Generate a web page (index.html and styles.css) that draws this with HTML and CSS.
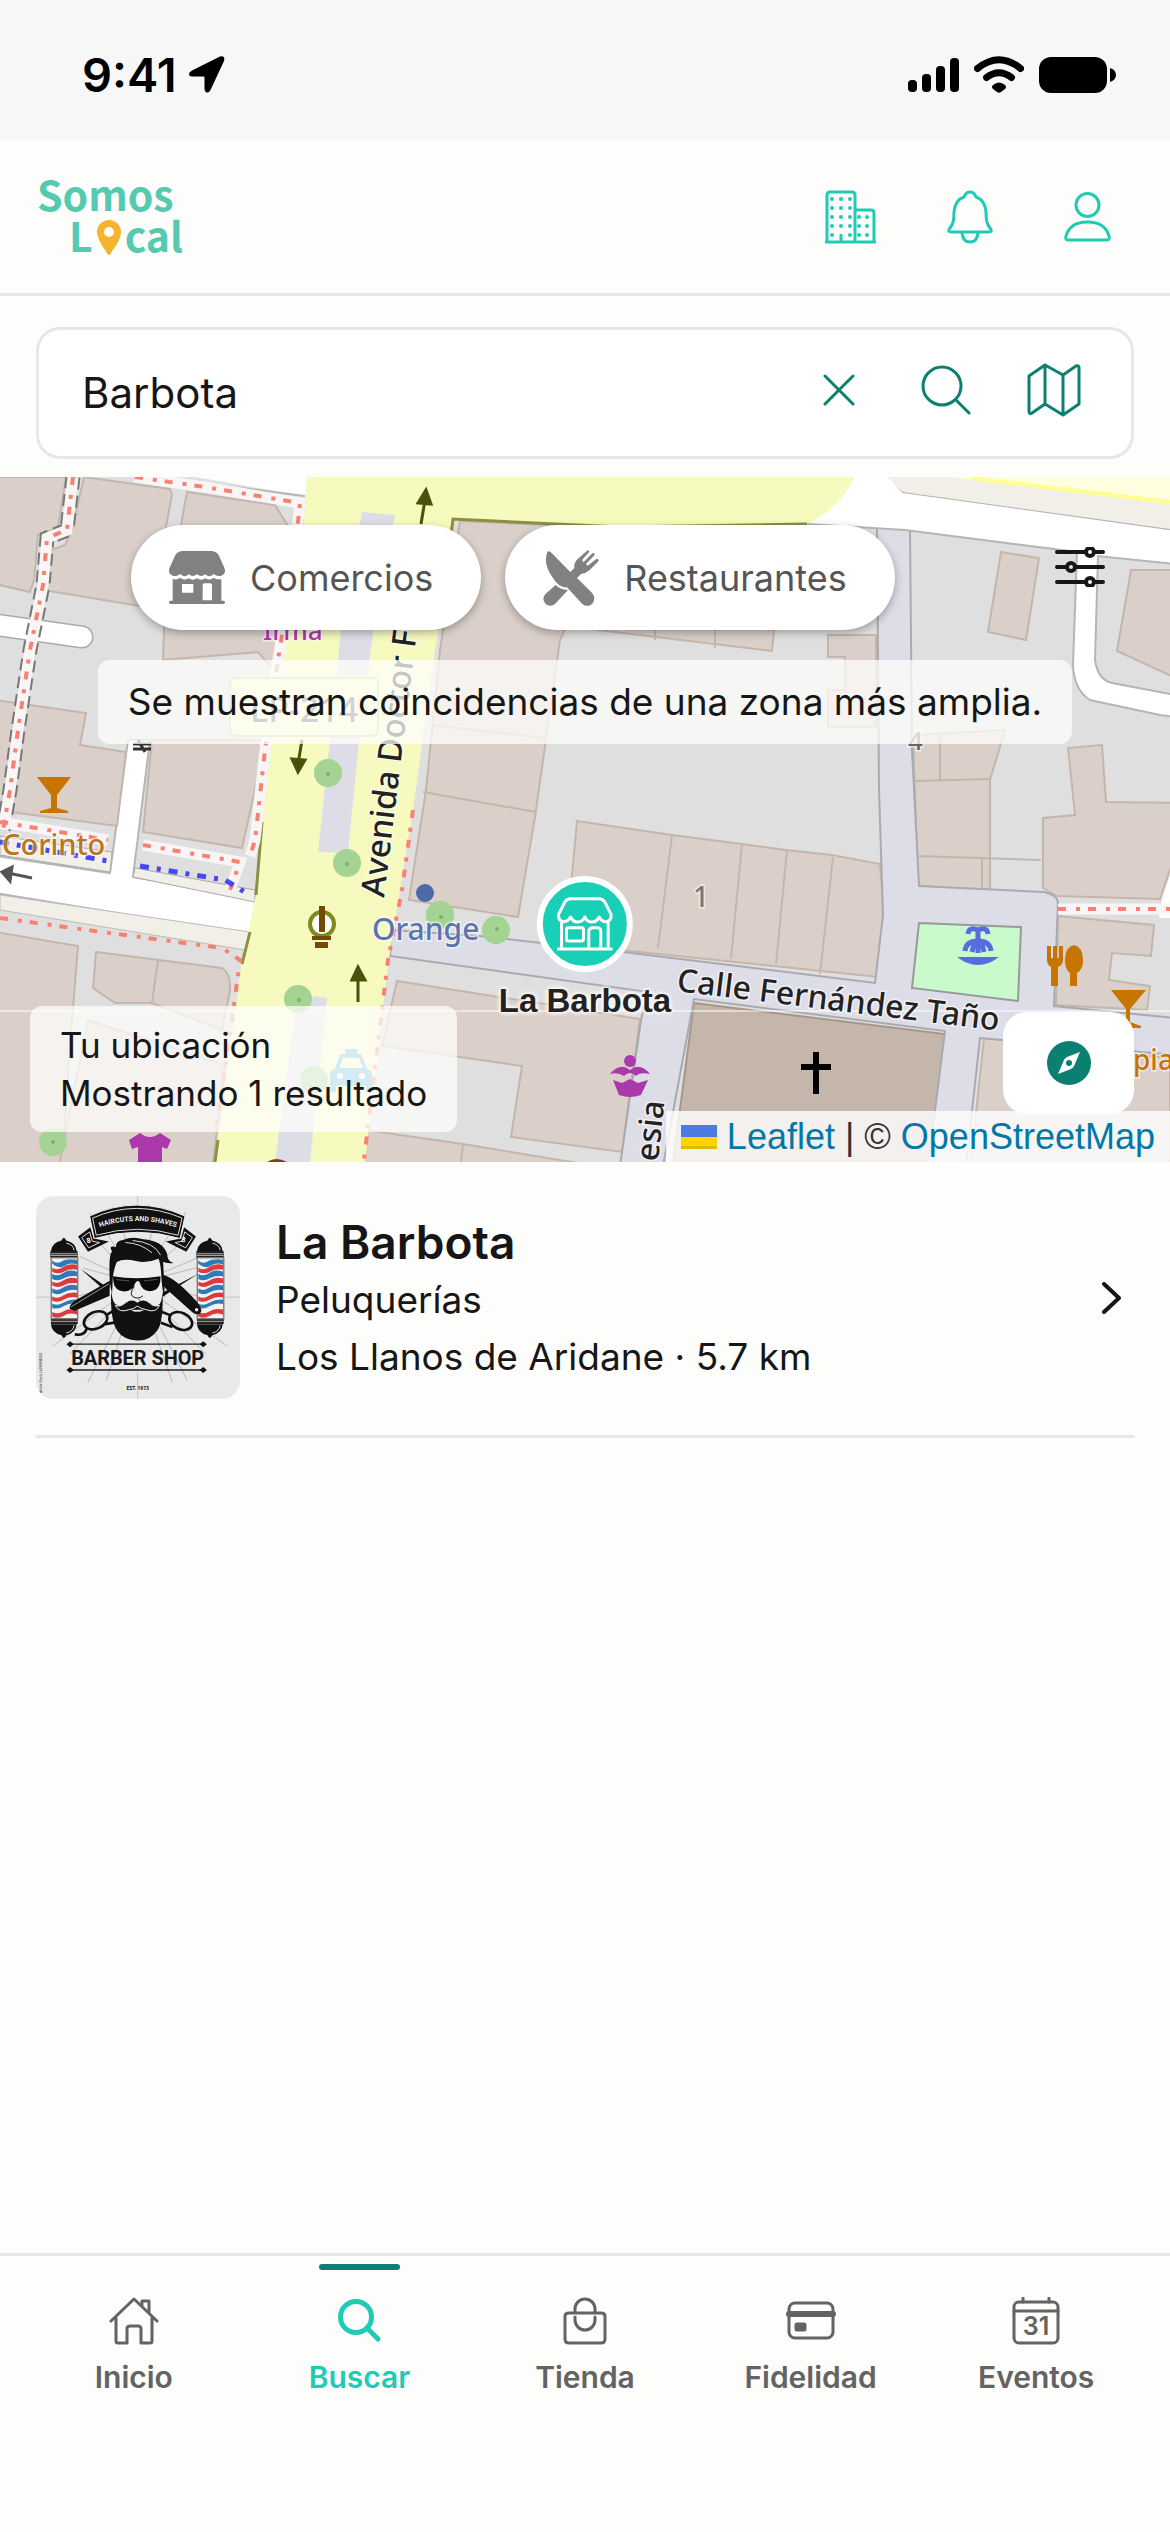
FILE: index.html
```html
<!DOCTYPE html>
<html lang="es">
<head>
	<title>Somos Local</title>
	<meta charset="utf-8">
	<meta name="viewport" content="width=device-width, initial-scale=1">
	<link rel="stylesheet" href="styles.css">
</head>
<body>

	<div class="status">
		<div class="status-left">
			<span>9:41</span>
			<svg width="36" height="37" viewBox="0 0 36 37"><path d="M31 0.5Q36.500 -0.500 35 5L21.500 34Q20 37 17.500 36.500Q15.500 36 15.500 33V21.500Q15.500 20.500 14.500 20.500H3Q0 20.500 0 18Q0 16 3 14.500Z"/></svg>
		</div>
		<div class="status-right">
			<svg width="51" height="36" viewBox="0 0 51 36"><rect x="0" y="23" width="9" height="12" rx="4"/><rect x="14" y="17" width="9" height="18" rx="4"/><rect x="28" y="9" width="9" height="26" rx="4"/><rect x="42" y="1" width="9" height="34" rx="4"/></svg>
			<svg width="50" height="37" viewBox="0 0 50 37"><path d="M3.500 12.500Q25 -5 46.500 12.500M12.500 21.500Q25 12 37.500 21.500" fill="none" stroke="#000" stroke-width="7" stroke-linecap="round"/><path d="M19 29Q25 24 31 29Q33 31 31 33L27 36Q25 37.500 23 36L19 33Q17 31 19 29Z"/></svg>
			<svg width="77" height="36" viewBox="0 0 77 36"><rect width="68" height="36" rx="12"/><path d="M71 11Q77 13 77 18T71 25Z"/></svg>
		</div>
	</div>

	<header class="header">
		<a href="#" class="logo" aria-label="Somos Local">
			<span class="logo-top">Somos</span>
			<span class="logo-bottom">L<svg width="26" height="36" viewBox="0 0 26 36"><path fill="#f6b42e" fill-rule="evenodd" d="M13 0A12 12 0 0 1 25 12C25 20 17 29 14.500 34Q13 36 11.500 34C9 29 1 20 1 12A12 12 0 0 1 13 0ZM13 7A5 5 0 1 0 13 17A5 5 0 1 0 13 7Z"/></svg>cal</span>
		</a>
		<div class="header-icons">
			<button class="icon-btn" aria-label="Empresas">
				<svg width="51" height="54" viewBox="0 0 51 54"><g fill="none" stroke="#1fcbb4" stroke-width="3"><path d="M2 52V5Q2 2 5 2H27Q30 2 30 5V52M30 20H46Q49 20 49 23V52M0 52H51"/><path d="M16 52V44"/></g><g fill="none" stroke="#1fcbb4" stroke-width="4" stroke-linecap="round" stroke-dasharray="0 9"><path d="M7 9V46M25 9V46M34 27V46M42 27V46M16 9V37"/></g></svg>
			</button>
			<button class="icon-btn" aria-label="Avisos">
				<svg width="46" height="54" viewBox="0 0 46 54" fill="none" stroke="#1fcbb4" stroke-width="3" stroke-linejoin="round"><path d="M23 2Q27 2 29 7Q38 10 39 22C39 31 40 34 43 38Q46 42 42 42H4Q0 42 3 38C6 34 7 31 7 22Q8 10 17 7Q19 2 23 2Z"/><path d="M15 43Q16 52 23 52T31 43"/></svg>
			</button>
			<button class="icon-btn" aria-label="Perfil">
				<svg width="47" height="52" viewBox="0 0 47 52" fill="none" stroke="#1fcbb4" stroke-width="3" stroke-linejoin="round"><circle cx="23.500" cy="14" r="11.500"/><path d="M4 49Q1 49 2 45Q6 31 23.500 31T45 45Q46 49 43 49Z"/></svg>
			</button>
		</div>
	</header>

	<main>
		<form class="search">
			<div class="search-box">
				<input type="text" class="search-input" aria-label="Buscar comercios" value="Barbota">
				<button type="reset" class="icon-btn clear" aria-label="Borrar">
					<svg width="32" height="32" viewBox="0 0 32 32" class="line"><path d="M2 2L30 30M30 2L2 30"/></svg>
				</button>
				<button type="submit" class="icon-btn" aria-label="Buscar">
					<svg width="50" height="50" viewBox="0 0 50 50" class="line"><circle cx="21" cy="21" r="19"/><path d="M35 35L48 48"/></svg>
				</button>
				<button type="button" class="icon-btn" aria-label="Mapa">
					<svg width="54" height="54" viewBox="0 0 54 54" class="line"><path d="M2 13L18 2L36 12L49 3Q52 2 52 5V41L36 52L18 41L5 50Q2 52 2 48ZM18 2V41M36 12V52"/></svg>
				</button>
			</div>
		</form>

		<section class="map">
			<svg class="map-tiles" viewBox="0 477 1170 685" role="img" aria-label="Mapa de la zona">
				<rect y="477" width="1170" height="685" fill="#e0dfdf"/>

				<!-- streets -->
				<path class="kerb" d="M-10 855L110 873L128 740H150L133 877L262 900L250 935L-10 892Z" fill="#fff"/>
				<path d="M0 895L250 932L245 950L0 910Z" fill="#f2efe9" stroke="#bbb"/>
				<path d="M135 868L255 890V902L133 877ZM0 836L112 852L110 872L0 855Z" fill="#f2efe9" stroke="#aaa"/>
				<path d="M205 477H310L305 496L155 470Z" fill="#fff"/>
				<path class="kerb" d="M150 476L305 496"/>
				<path d="M-10 624L82 637" stroke="#aaa" stroke-width="23" stroke-linecap="round"/>
				<path d="M-10 624L82 637" stroke="#fff" stroke-width="20" stroke-linecap="round"/>

				<!-- buildings, left side -->
				<g class="building">
					<path d="M-5 477H66L58 528L38 535L34 580L30 592L-5 584Z"/>
					<path d="M84 477L170 489L172 495L165 532L152 608L43 590L46 552L65 545L72 530Z"/>
					<path d="M187 492L275 505L300 545L284 600L170 585Z"/>
					<path d="M165 600L285 625L282 680L258 652L163 660Z"/>
					<path d="M-5 700L86 713L80 745L126 752L117 826L-5 810Z"/>
					<path d="M152 740H266L242 848L143 832Z"/>
					<path d="M-5 932L78 946L70 1045L62 1170H-5Z"/>
					<path d="M96 952L222 968Q231 973 230 990L222 1030L152 1003L115 1003L93 988ZM158 960L152 1003"/>
					<path d="M88 1020L225 1065L212 1170H58Z"/>
				</g>

				<!-- building block between the avenue and the plaza -->
				<g class="building">
					<path d="M460 521L612 528L560 640L535 817L518 917L409 900L426 790L440 650Z"/>
					<path d="M423 792L536 812M430 725L545 738"/>
					<path d="M598 630L772 651L775 620L600 610ZM655 620V640M715 620V648"/>
					<path d="M828 635H876V727H828V690H845V657H828Z"/>
					<path d="M577 821L672 835L742 844L786 850L832 855L880 864L884 910L878 977L620 950L566 940ZM672 835L658 948M742 844L731 958M787 850L776 964M833 857L820 974"/>
					<path d="M397 981L640 1019L622 1152L511 1137L522 1066L382 1046Z"/>
					<path d="M366 1130L463 1144L620 1170H362ZM463 1144L460 1170"/>
					<path d="M984 1038L1170 1058V1170H970Z"/>
				</g>

				<!-- buildings, right side -->
				<g class="building">
					<path d="M1001 552L1039 558L1026 640L988 632Z"/>
					<path d="M1131 570H1180V680L1117 651Z"/>
					<path d="M913 735L1005 730L990 780V890L918 886ZM940 735V781M916 781L990 779M917 856L1041 860M982 859V888"/>
					<path d="M1068 748L1102 745L1106 802L1180 803V840L1160 899L1057 896L1043 888V818L1075 815Z"/>
					<path d="M1058 916L1154 925L1151 956L1112 953L1109 980L1150 986L1147 1010L1056 1005Z"/>
				</g>
				<path d="M694 1003L945 1034L930 1170H672Z" fill="#c4b6ab" stroke="#a79687" stroke-width="2"/>

				<!-- pedestrian area -->
				<path class="walk" d="M877 527L910 530L912 750L919 886L1044 892Q1057 895 1058 902L1054 1006L1175 1018V1055L980 1038L966 1166H928L945 1031L694 999L663 1166H620L641 1020L648 992L390 956L392 930L480 936L623 952L875 983L883 915L879 790Z"/>
				<path d="M919 923L1021 927L1018 1001L912 988Z" fill="#c8facc" stroke="#999" stroke-width="2"/>

				<!-- white street on the right -->
				<path class="kerb" d="M807 524L855 470H884L903 492L1175 530V564L1098 556L1095 660Q1098 680 1112 683L1175 695V717L1160 715L1090 700Q1074 690 1073 665L1077 552L905 530Z" fill="#fff"/>
				<path d="M887 477L903 492L1170 529V477Z" fill="#f2efe9"/>
				<path d="M950 477L1170 503V477Z" fill="#ffffe0"/>
				<path d="M970 478L1170 502" stroke="#ffff90" stroke-width="4"/>
				<path d="M1162 899L1175 860V918H1159Z" fill="#fff"/>

				<!-- avenue -->
				<path d="M307 477H855Q838 510 807 524L620 527L453 519L446 590L435 650L413 810L400 890L388 965L365 1162H215L242 960L256 895L262 820L283 640L300 540Z" fill="#f7fabf"/>
				<path d="M807 524L620 527L453 519L448 560M304 500L299 550M262 822L256 895M250 932L242 964M218 1140L215 1162" fill="none" stroke="#8a9140" stroke-width="3"/>
				<path d="M362 512L395 515L376 610L359 740L348 853L318 852L330 740L343 610Z" fill="#dddde8"/>
				<path d="M314 996L327 998L310 1162H275L295 1015Z" fill="#dddde8"/>

				<!-- footways -->
				<path class="footway-edge" d="M73 477L67 530L47 538L43 585L35 625L30 650L18 730L10 790L3 830"/>
				<path class="footway-bed" d="M73 477L67 530L47 538L43 585L35 625L30 650L18 730L10 790L3 830"/>
				<path class="footway-bed" d="M135 477L205 487L300 503L295 550L278 660L265 750L255 840L250 856M0 822L108 840M143 845L240 862L230 890M1058 909H1170"/>
				<path class="footway" d="M73 477L67 530L47 538L43 585L35 625L30 650L18 730L10 790L3 830"/>
				<path class="footway" d="M135 477L205 487L300 503L295 550L278 660L265 750L255 840L250 856M0 822L108 840M143 845L240 862L230 890M0 918L80 929L222 948L240 960L232 1020L216 1130M413 810L402 890L388 960L364 1160M1058 909H1170"/>
				<path d="M0 842L108 861M140 866L225 880L248 894" fill="none" stroke="#4747f0" stroke-width="5" stroke-dasharray="9 8 4 8"/>
				<path d="M0 1011H1170" stroke="#fff" stroke-width="2" opacity="0.5"/>

				<!-- trees -->
				<g fill="#a5d393">
					<circle cx="328" cy="773" r="14"/><circle cx="347" cy="863" r="14"/><circle cx="298" cy="999" r="14"/><circle cx="314" cy="1080" r="14"/><circle cx="53" cy="1142" r="14"/><circle cx="440" cy="915" r="14"/><circle cx="496" cy="930" r="14"/>
				</g>
				<g fill="#7fae72">
					<circle cx="328" cy="774" r="2"/><circle cx="347" cy="864" r="2"/><circle cx="299" cy="1000" r="2"/><circle cx="53" cy="1142" r="2"/><circle cx="441" cy="917" r="2"/><circle cx="497" cy="929" r="2"/>
				</g>

				<!-- one way arrows -->
				<g stroke="#47520b" stroke-width="3" fill="#47520b">
					<path d="M421 524L425 500M418 503L426 490L431 504Z"/>
					<path d="M302 740L298 764M292 759L298 772L305 760Z"/>
					<path d="M358 1002V975M352 980L358 967L365 980Z"/>
				</g>
				<path d="M32 878L8 873M12 867L2 872L10 881Z" stroke="#555" stroke-width="3" fill="#555"/>
				<path d="M133 744H151M133 749H151M138 740L145 752" stroke="#333" stroke-width="3"/>

				<!-- bars and restaurants -->
				<g fill="#c77400">
					<path d="M37 777H71L57 795V808L68 811V813H40V811L51 808V795Z"/>
					<path d="M1111 990H1146L1130 1009V1022L1141 1026V1028H1117V1026L1126 1022V1009Z"/>
					<path d="M1047 946H1051V958H1053V946H1057V958H1059V946H1063V960Q1063 965 1058 967V986H1051V967Q1047 965 1047 960Z"/>
					<path d="M1074 945Q1083 947 1083 960Q1083 970 1077 973V986H1070V973Q1065 970 1065 960Q1065 947 1074 945Z"/>
				</g>

				<!-- shops, taxi, fountain, church, monument -->
				<g fill="#ac39ac">
					<path d="M140 1133Q150 1141 160 1133L171 1140L167 1149L162 1147V1162H138V1147L132 1149L129 1140Z"/>
					<circle cx="630" cy="1061" r="6"/>
					<path d="M610 1074Q620 1062 630 1070Q640 1062 650 1074Q640 1072 636 1076Q630 1070 624 1076Q618 1072 610 1074ZM613 1080L622 1083L630 1079L638 1083L648 1080L641 1095Q630 1099 619 1095Z"/>
				</g>
				<path fill="#59b4df" d="M345 1049H357V1054H361L367 1069Q372 1070 372 1075V1092H366V1086H336V1092H330V1075Q330 1070 335 1069L340 1054H345ZM343 1058L339 1068H363L359 1058Z"/>
				<circle cx="340" cy="1076" r="3" fill="#fff"/><circle cx="362" cy="1076" r="3" fill="#fff"/>
				<g fill="none" stroke="#576ddf" stroke-width="5"><path d="M968 934Q969 926 978 930V953M988 934Q987 926 978 930M965 951Q966 941 978 941Q990 941 991 951M972 952L974 944M984 952L982 944"/></g>
				<path d="M957 957H999Q978 973 957 957Z" fill="#576ddf"/>
				<path d="M816 1052V1094M801 1067H831" stroke="#000" stroke-width="6"/>
				<circle cx="322" cy="924" r="12" fill="#fff" stroke="#7f8a1e" stroke-width="4"/>
				<path d="M319 906H325V932H319ZM312 936H331V940H312ZM315 942H328V948H315Z" fill="#734a08"/>
				<path d="M267 1162Q276 1156 287 1162Z" fill="#734a08"/>
				<circle cx="425" cy="893" r="9" fill="#4c69a8"/>

				<!-- labels -->
				<rect x="230" y="678" width="148" height="58" rx="6" fill="#f9fcc8" stroke="#c9cc90" stroke-width="2"/>
				<g class="map-text">
					<text x="250" y="722" font-size="34" fill="#555">LP-214</text>
					<text transform="translate(384 898) rotate(-83)" font-size="33">Avenida Doctor F</text>
					<text transform="translate(676 991) rotate(7)" font-size="32">Calle Fernández Taño</text>
					<text transform="translate(658 1162) rotate(-84)" font-size="32">esia</text>
					<text x="2" y="855" font-size="29" fill="#b8761d">Corinto</text>
					<text x="372" y="940" font-size="30" fill="#5b75b0">Orange</text>
					<text x="263" y="640" font-size="26" fill="#ac39ac">Irma</text>
					<text x="1133" y="1070" font-size="28" fill="#c77400">pia</text>
					<text x="693" y="907" font-size="28" fill="#777">1</text>
					<text x="908" y="750" font-size="26" fill="#666">4</text>
				</g>
			</svg>

			<div class="chips">
				<button class="chip">
					<svg width="56" height="54" viewBox="0 0 168 162" fill="#818181"><path d="M42 0H126Q142 0 150 14L166 50Q173 68 157 74Q144 78 134 69Q121 82 109 70Q96 80 84 70Q71 80 59 70Q46 82 34 69Q24 78 11 74Q-5 68 2 50L18 14Q26 0 42 0Z"/><path fill-rule="evenodd" d="M11 84Q24 88 34 80Q46 90 59 82Q71 90 84 82Q96 90 109 82Q121 90 134 80Q144 88 157 84V149H164Q168 149 168 154Q168 159 164 159H4Q0 159 0 154Q0 149 4 149H11ZM39 99V125H73V99ZM107 97Q101 97 101 103V148H129V103Q129 97 123 97Z"/></svg>
					Comercios
				</button>
				<button class="chip">
					<svg width="56" height="56" viewBox="0 0 168 168" fill="#818181"><path d="M14 4Q20 2 26 9L82 66L94 54Q92 38 104 27L132 2Q137 -1 139 5L117 31L122 36L149 9Q156 8 155 15L129 42L134 47L161 26Q168 26 167 33L141 59Q129 70 114 72L102 84L148 130Q160 146 148 161Q132 174 117 161L72 112Q48 114 30 84Q-2 40 14 4Z"/><path d="M38 105Q50 118 75 120L38 160Q24 174 8 162Q-6 146 8 131Z"/></svg>
					Restaurantes
				</button>
			</div>
			<button class="icon-btn filter" aria-label="Filtros">
				<svg width="50" height="40" viewBox="0 0 50 40" fill="none" stroke="#161616" stroke-width="4" stroke-linecap="round"><path d="M2 5H30M40 5H48M2 20H11M21 20H48M2 35H30M40 35H48"/><circle cx="35" cy="5" r="4"/><circle cx="16" cy="20" r="4"/><circle cx="35" cy="35" r="4"/></svg>
			</button>

			<p class="note">Se muestran coincidencias de una zona más amplia.</p>

			<a href="#" class="pin">
				<span class="pin-dot">
					<svg width="56" height="54" viewBox="0 0 168 162" fill="none" stroke="#fff" stroke-width="9" stroke-linejoin="round" stroke-linecap="round"><path d="M42 5H126Q138 5 144 15L163 53Q164 72 147 74Q134 74 127 60Q120 75 105 75Q90 75 84 60Q78 75 63 75Q48 75 41 60Q34 74 21 74Q4 72 5 53L24 15Q30 5 42 5Z"/><path d="M14 78V156M154 78V156M4 156H164M34 92H74Q80 92 80 98V126Q80 132 74 132H34Q29 132 29 126V98Q29 92 34 92ZM96 156V104Q96 92 108 92H120Q132 92 132 104V156"/></svg>
				</span>
				<span class="pin-name">La Barbota</span>
			</a>

			<p class="place">Tu ubicación<br>Mostrando 1 resultado</p>

			<div class="attribution">
				<a href="#"><svg width="36" height="24" viewBox="0 0 12 8"><path fill="#4C7BE1" d="M0 0h12v4H0z"/><path fill="#FFD500" d="M0 4h12v3H0z"/><path fill="#E0BC00" d="M0 7h12v1H0z"/></svg> Leaflet</a> | © <a href="#">OpenStreetMap</a>
			</div>
			<button class="locate" aria-label="Centrar en mi ubicación">
				<svg width="44" height="44" viewBox="0 0 44 44"><circle cx="22" cy="22" r="22" fill="#0c8070"/><path fill="#fff" fill-rule="evenodd" d="M33 11L27 25Q26 27 24 28L11 33L17 19Q18 17 20 16ZM22 19A3 3 0 1 0 22 25A3 3 0 1 0 22 19Z"/></svg>
			</button>
		</section>

		<ul class="results">
			<li>
				<a href="#" class="result">
					<svg class="thumb" viewBox="48 48 616 612">
						<rect x="48" y="48" width="616" height="612" fill="#e9e9ea"/>
						<path d="M48 353H90M620 353H664M355 48V76M355 580V660" stroke="#c4c4c4" stroke-width="3"/>
						<!-- rays -->
						<g stroke="#b9b9b9" stroke-width="3"><path d="M355 310L180 230M355 310L190 265M355 310L225 175M355 310L265 165M355 310L310 150M355 310L400 150M355 310L450 165M355 310L490 185M355 310L535 235M355 310L540 262M355 310L100 500M355 310L150 525M355 310L205 610M355 310L260 605M355 310L460 610M355 310L505 605M355 310L560 525M355 310L625 500M355 310L170 350M355 310L540 350M210 100L225 125M500 95L488 125"/></g>

						<!-- ribbon -->
						<path d="M175 170L212 142L222 176L268 185L205 216Z" fill="#111"/><path d="M531 170L495 142L486 176L440 185L502 216Z" fill="#111"/>
						<path d="M186 173L210 156L218 184L240 188L207 204ZM520 173L497 156L490 184L468 188L500 204Z" fill="none" stroke="#ddd" stroke-width="3"/>
						<text class="thumb-text" transform="translate(202 190) rotate(-10)" font-size="22" fill="#fff">8</text>
						<text class="thumb-text" transform="translate(486 186) rotate(10)" font-size="22" fill="#fff">8</text>
						<path d="M210 108Q350 42 498 108L483 176Q355 138 224 176Z" fill="#111" stroke="#eee" stroke-width="3"/>
						<path d="M219 114Q350 56 489 114L477 166Q355 130 230 166Z" fill="none" stroke="#ddd" stroke-width="3"/>
						<path id="ribbon" d="M228 146Q355 100 484 146" fill="none"/>
						<text class="thumb-text" font-size="21" fill="#eee" text-anchor="middle"><textPath href="#ribbon" startOffset="50%">HAIRCUTS AND SHAVES</textPath></text>

						<!-- barber poles -->
						<g id="pole">
							<path d="M93 214Q96 188 125 182Q132 165 139 182Q168 188 171 214V226H93ZM93 435H171Q168 462 139 468Q132 485 125 468Q96 462 93 435Z" fill="#111"/>
							<path d="M93 418H174V434H93ZM91 214H174V234H91Z" fill="#222"/>
							<path d="M92 222H173M92 227H173M92 426H173" stroke="#eee" stroke-width="2"/>
							<path d="M140 190Q160 194 163 211M140 461Q160 457 163 438" stroke="#ddd" stroke-width="3" fill="none"/>
							<rect x="94" y="234" width="80" height="184" fill="#f4f1ef" stroke="#777" stroke-width="4"/>
							<path d="M97 242Q111 254 125 245T172 240V254Q151 247 135 258T97 252ZM97 282Q112 292 130 280T172 276V290Q150 286 132 296T97 298ZM97 326Q112 337 130 324T172 318V332Q150 327 132 338T97 340ZM97 372Q112 381 130 370T172 360V374Q150 369 132 380T97 386Z" fill="#2d7bb7"/>
							<path d="M97 264Q112 275 130 262T172 256V270Q150 266 132 276T97 276ZM97 306Q112 316 130 303T172 297V311Q150 307 132 317T97 318ZM97 350Q112 360 130 348T172 340V354Q150 349 132 360T97 364ZM97 398Q112 406 130 396T172 390V406Q150 398 132 409T97 411Z" fill="#d93c3c"/>
						</g>
						<use href="#pole" x="441"/>

						<!-- scissors and razor -->
						<path d="M183 268L280 335L270 346ZM538 282L430 352L432 338Z" fill="#111"/>
						<path d="M150 388L165 394L280 345L272 303L168 362Q148 375 150 388Z" fill="#111"/>
						<path d="M154 382L268 313" stroke="#ddd" stroke-width="2"/>
						<path d="M432 285Q470 295 535 368Q555 395 542 403Q530 409 515 394L430 318Z" fill="#111"/><circle cx="533" cy="391" r="5" fill="#eee"/>
						<g fill="none" stroke="#111" stroke-width="8"><ellipse cx="228" cy="423" rx="37" ry="25" transform="rotate(-24 228 423)"/><ellipse cx="485" cy="425" rx="36" ry="25" transform="rotate(24 485 425)"/><path d="M202 446Q195 472 165 465M258 408L285 393M455 408L420 395M252 435L285 430M460 443L425 430"/></g>

						<!-- head -->
						<path d="M274 235L270 345L285 400L355 455L425 400L435 240Z" fill="#ededed"/>
						<path d="M270 284Q268 220 278 215Q265 195 290 202Q287 183 310 180Q340 168 372 178Q430 182 444 222Q444 245 463 250Q440 252 432 246L437 355Q428 330 426 286Q425 253 418 237Q382 252 350 244Q312 235 292 247Q285 260 280 292L278 340Q270 318 270 284Z" fill="#111"/>
						<path d="M340 182Q405 187 424 226M318 188Q365 190 398 219" fill="none" stroke="#ddd" stroke-width="3"/>
						<path d="M280 290Q350 302 424 290L423 307Q418 334 392 335Q367 334 361 308Q354 300 348 310Q340 336 313 336Q285 332 282 307Z" fill="#0b0b0b"/>
						<path d="M290 300L330 304M374 304L415 299" stroke="#777" stroke-width="2"/>
						<path d="M345 320Q330 342 339 350Q355 362 371 349M358 361L366 364" fill="none" stroke="#111" stroke-width="3"/>
						<path d="M275 328Q278 375 294 376Q288 386 306 380Q325 358 354 373Q383 358 403 380Q421 386 416 376Q429 375 430 328Q434 430 413 455Q390 486 354 484Q312 482 294 455Q271 424 275 328Z" fill="#111"/>
						<path d="M287 377Q298 402 328 391Q344 388 354 380Q365 388 382 391Q412 402 421 377Q405 385 390 370Q373 354 354 368Q336 354 318 370Q301 385 287 377Z" fill="#111" stroke="#eee" stroke-width="3"/>
						<path d="M333 391H376L362 397H345Z" fill="#ddd"/>

						<!-- name -->
						<path d="M150 495H553M150 573H553" stroke="#222" stroke-width="4"/>
						<path d="M140 495L151 486L162 495L151 504ZM542 495L553 486L564 495L553 504ZM140 573L151 564L162 573L151 582ZM542 573L553 564L564 573L553 582Z" fill="#111"/>
						<text class="thumb-text" x="355" y="557" font-size="60" fill="#181818" text-anchor="middle">BARBER SHOP</text>
						<text class="thumb-text" x="355" y="634" font-size="15" fill="#111" text-anchor="middle">EST. 1973</text>
						<text transform="translate(66 642) rotate(-90)" font-size="10" fill="#222" font-family="Liberation Sans, sans-serif">Adobe Stock | #296994259</text>
					</svg>
					<span class="result-text">
						<strong>La Barbota</strong>
						<span>Peluquerías</span>
						<span>Los Llanos de Aridane · 5.7 km</span>
					</span>
					<svg width="20" height="32" viewBox="0 0 20 32" fill="none" stroke="#161616" stroke-width="4" stroke-linecap="round" stroke-linejoin="round"><path d="M2 2L17 16L2 30"/></svg>
				</a>
			</li>
		</ul>
	</main>

	<nav class="tabs">
		<a href="#" class="tab">
			<svg width="50" height="48" viewBox="0 0 50 48"><path d="M2 24L25 2L48 24M33 8V4H40V16M7 21V44Q7 46 9 46H18V32Q18 29 21 29H29Q32 29 32 32V46H41Q43 46 43 44V21"/></svg>
			Inicio
		</a>
		<a href="#" class="tab tab-active">
			<svg width="50" height="48" viewBox="0 0 50 48"><circle cx="22" cy="20" r="15.500"/><path d="M33 31L44 42"/></svg>
			Buscar
		</a>
		<a href="#" class="tab">
			<svg width="50" height="48" viewBox="0 0 50 48"><path d="M9 16H41Q45 16 45 19V42Q45 46 41 46H9Q5 46 5 42V19Q5 16 9 16ZM15 15V12A10 10 0 0 1 35 12V15M15 20V23A10 10 0 0 0 35 23V20"/></svg>
			Tienda
		</a>
		<a href="#" class="tab">
			<svg width="50" height="48" viewBox="0 0 50 48"><rect x="3" y="6" width="44" height="35" rx="6"/><path d="M3 17H47" stroke-width="6"/><rect x="10" y="27" width="9" height="6" rx="1" fill="#636363"/></svg>
			Fidelidad
		</a>
		<a href="#" class="tab">
			<svg width="50" height="48" viewBox="0 0 50 48"><rect x="3" y="5" width="44" height="41" rx="5"/><path d="M3 14H47M12 1V5M38 1V5"/><text x="25" y="38" text-anchor="middle" class="cal-day">31</text></svg>
			Eventos
		</a>
	</nav>

</body>
</html>
```
FILE: styles.css
```css
* {
	box-sizing: border-box;
}

body {
	margin: 0;
	min-height: 100vh;
	display: flex;
	flex-direction: column;
	background: #fdfdfb;
	color: #161616;
	font-family: Inter, "Liberation Sans", sans-serif;
	font-size: 37px;
}

a {
	color: inherit;
	text-decoration: none;
}

button {
	font: inherit;
	border: 0;
	cursor: pointer;
}

svg {
	display: block;
	flex-shrink: 0;
}

.icon-btn {
	display: flex;
	padding: 0;
	background: none;
}

/* Phone status bar */

.status {
	display: flex;
	justify-content: space-between;
	align-items: center;
	height: 140px;
	padding: 9px 54px 0 82px;
	background: #f7f7f7;
	color: #000;
}

.status-left {
	display: flex;
	align-items: center;
	gap: 12px;
	font-size: 47px;
	font-weight: 600;
}

.status-right {
	display: flex;
	align-items: center;
	gap: 15px;
}

/* Header */

.header {
	display: flex;
	justify-content: space-between;
	align-items: center;
	height: 156px;
	padding: 0 59px 0 37px;
	border-bottom: 3px solid #e8e8e6;
}

.logo {
	display: flex;
	flex-direction: column;
	padding-bottom: 2px;
	color: #55cab1;
	font-family: "Noto Sans CJK SC", "Noto Sans", sans-serif;
	font-size: 41px;
	font-weight: 700;
	line-height: 37px;
}

.logo-bottom {
	display: flex;
	align-items: center;
	gap: 3px;
	padding-left: 32px;
}

.logo-bottom svg {
	margin-top: 8px;
}

.header-icons {
	display: flex;
	align-items: center;
	gap: 71px;
}

/* Search */

.search {
	padding: 31px 36px 18px;
}

.search-box {
	display: flex;
	align-items: center;
	gap: 56px;
	height: 132px;
	padding: 0 50px 6px 43px;
	background: #fff;
	border: 3px solid #e7e7e7;
	border-radius: 24px;
}

.search-input {
	flex: 1;
	min-width: 0;
	padding: 4px 0 0;
	border: 0;
	outline: none;
	background: none;
	color: #161616;
	font: inherit;
	font-size: 42px;
}

.clear {
	margin-right: 10px;
}

.line {
	fill: none;
	stroke: #0c8070;
	stroke-width: 3;
	stroke-linecap: round;
	stroke-linejoin: round;
}

/* Map */

.map {
	position: relative;
	overflow: hidden;
}

.map-tiles {
	width: 100%;
	height: auto;
}

.building {
	fill: #dacfc9;
	stroke: #c4b6ab;
	stroke-width: 2;
}

.walk {
	fill: #dddde8;
	stroke: #a9a9b0;
	stroke-width: 2;
}

.kerb {
	stroke: #b5b5b5;
	stroke-width: 2;
}

.footway-edge,
.footway-bed,
.footway {
	fill: none;
}

.footway-edge {
	stroke: #777;
	stroke-width: 15;
	stroke-dasharray: 12 6;
}

.footway-bed {
	stroke: #f7f5f5;
	stroke-width: 11;
}

.footway {
	stroke: #fa8072;
	stroke-width: 4;
	stroke-dasharray: 8 10 4 8;
}

.map-text {
	font-family: "Noto Sans", sans-serif;
	font-weight: 500;
	fill: #222;
	stroke: #fff;
	stroke-width: 3;
	stroke-opacity: 0.6;
	paint-order: stroke;
}

.chips {
	position: absolute;
	top: 48px;
	left: 131px;
	display: flex;
	gap: 24px;
	font-size: 36px;
}

.chip {
	display: flex;
	align-items: center;
	gap: 25px;
	height: 105px;
	padding: 0 48px 0 38px;
	border-radius: 53px;
	background: #fff;
	color: #555;
	box-shadow: 0 3px 8px rgba(0, 0, 0, 0.3);
}

.filter {
	position: absolute;
	top: 70px;
	right: 65px;
}

.note,
.place {
	position: absolute;
	margin: 0;
	border-radius: 12px;
	background: rgba(253, 253, 251, 0.75);
	line-height: 48px;
}

.note {
	top: 183px;
	left: 50%;
	transform: translateX(-50%);
	padding: 18px 30px;
	white-space: nowrap;
}

.place {
	left: 30px;
	bottom: 30px;
	padding: 15px 30px;
	font-size: 35px;
}

.pin {
	position: absolute;
	top: 399px;
	left: 50%;
	transform: translateX(-50%);
	display: flex;
	flex-direction: column;
	align-items: center;
	gap: 10px;
	font: bold 33px/38px "Liberation Sans", sans-serif;
	color: #222;
	text-shadow: 0 0 4px #fff, 0 0 4px #fff, 0 0 6px #fff;
}

.pin-dot {
	display: flex;
	align-items: center;
	justify-content: center;
	width: 96px;
	height: 96px;
	border: 6px solid #fff;
	border-radius: 50%;
	background: #19d0b7;
}

.attribution {
	position: absolute;
	right: 0;
	bottom: 0;
	padding: 0 15px;
	background: rgba(255, 255, 255, 0.8);
	color: #333;
	font: 36px/51px "Liberation Sans", sans-serif;
}

.attribution a {
	color: #0078a8;
}

.attribution svg {
	display: inline;
}

.locate {
	position: absolute;
	right: 36px;
	bottom: 48px;
	display: flex;
	align-items: center;
	justify-content: center;
	width: 131px;
	height: 102px;
	border-radius: 24px;
	background: #fff;
}

/* Results */

.results {
	margin: 0;
	padding: 0 36px;
	list-style: none;
}

.result {
	display: flex;
	align-items: center;
	gap: 36px;
	padding: 34px 12px 36px 0;
	border-bottom: 3px solid #e8e8e6;
}

.thumb {
	width: 204px;
	height: 203px;
	border-radius: 18px;
}

.thumb-text {
	font-family: "Liberation Sans Narrow", "Roboto", sans-serif;
	font-weight: bold;
}

.result-text {
	flex: 1;
	display: flex;
	flex-direction: column;
	padding-top: 4px;
	line-height: 57px;
}

.result-text strong {
	font-size: 46px;
	font-weight: 600;
}

/* Bottom tabs */

.tabs {
	display: flex;
	height: 279px;
	margin-top: auto;
	padding: 0 21px;
	border-top: 3px solid #e8e8e6;
}

.tab {
	position: relative;
	flex: 1;
	display: flex;
	flex-direction: column;
	align-items: center;
	gap: 14px;
	padding-top: 41px;
	color: #636363;
	font-size: 30px;
	font-weight: 600;
	line-height: 36px;
}

.tab svg {
	fill: none;
	stroke: currentColor;
	stroke-width: 3;
	stroke-linecap: round;
	stroke-linejoin: round;
}

.tab-active {
	color: #1fcbb4;
}

.tab-active svg {
	stroke-width: 5;
}

/* Marks the open tab */

.tab-active::before {
	content: "";
	position: absolute;
	top: 8px;
	width: 81px;
	height: 6px;
	border-radius: 3px;
	background: #0c8070;
}

.cal-day {
	fill: #636363;
	stroke: none;
	font-size: 25px;
}
```
